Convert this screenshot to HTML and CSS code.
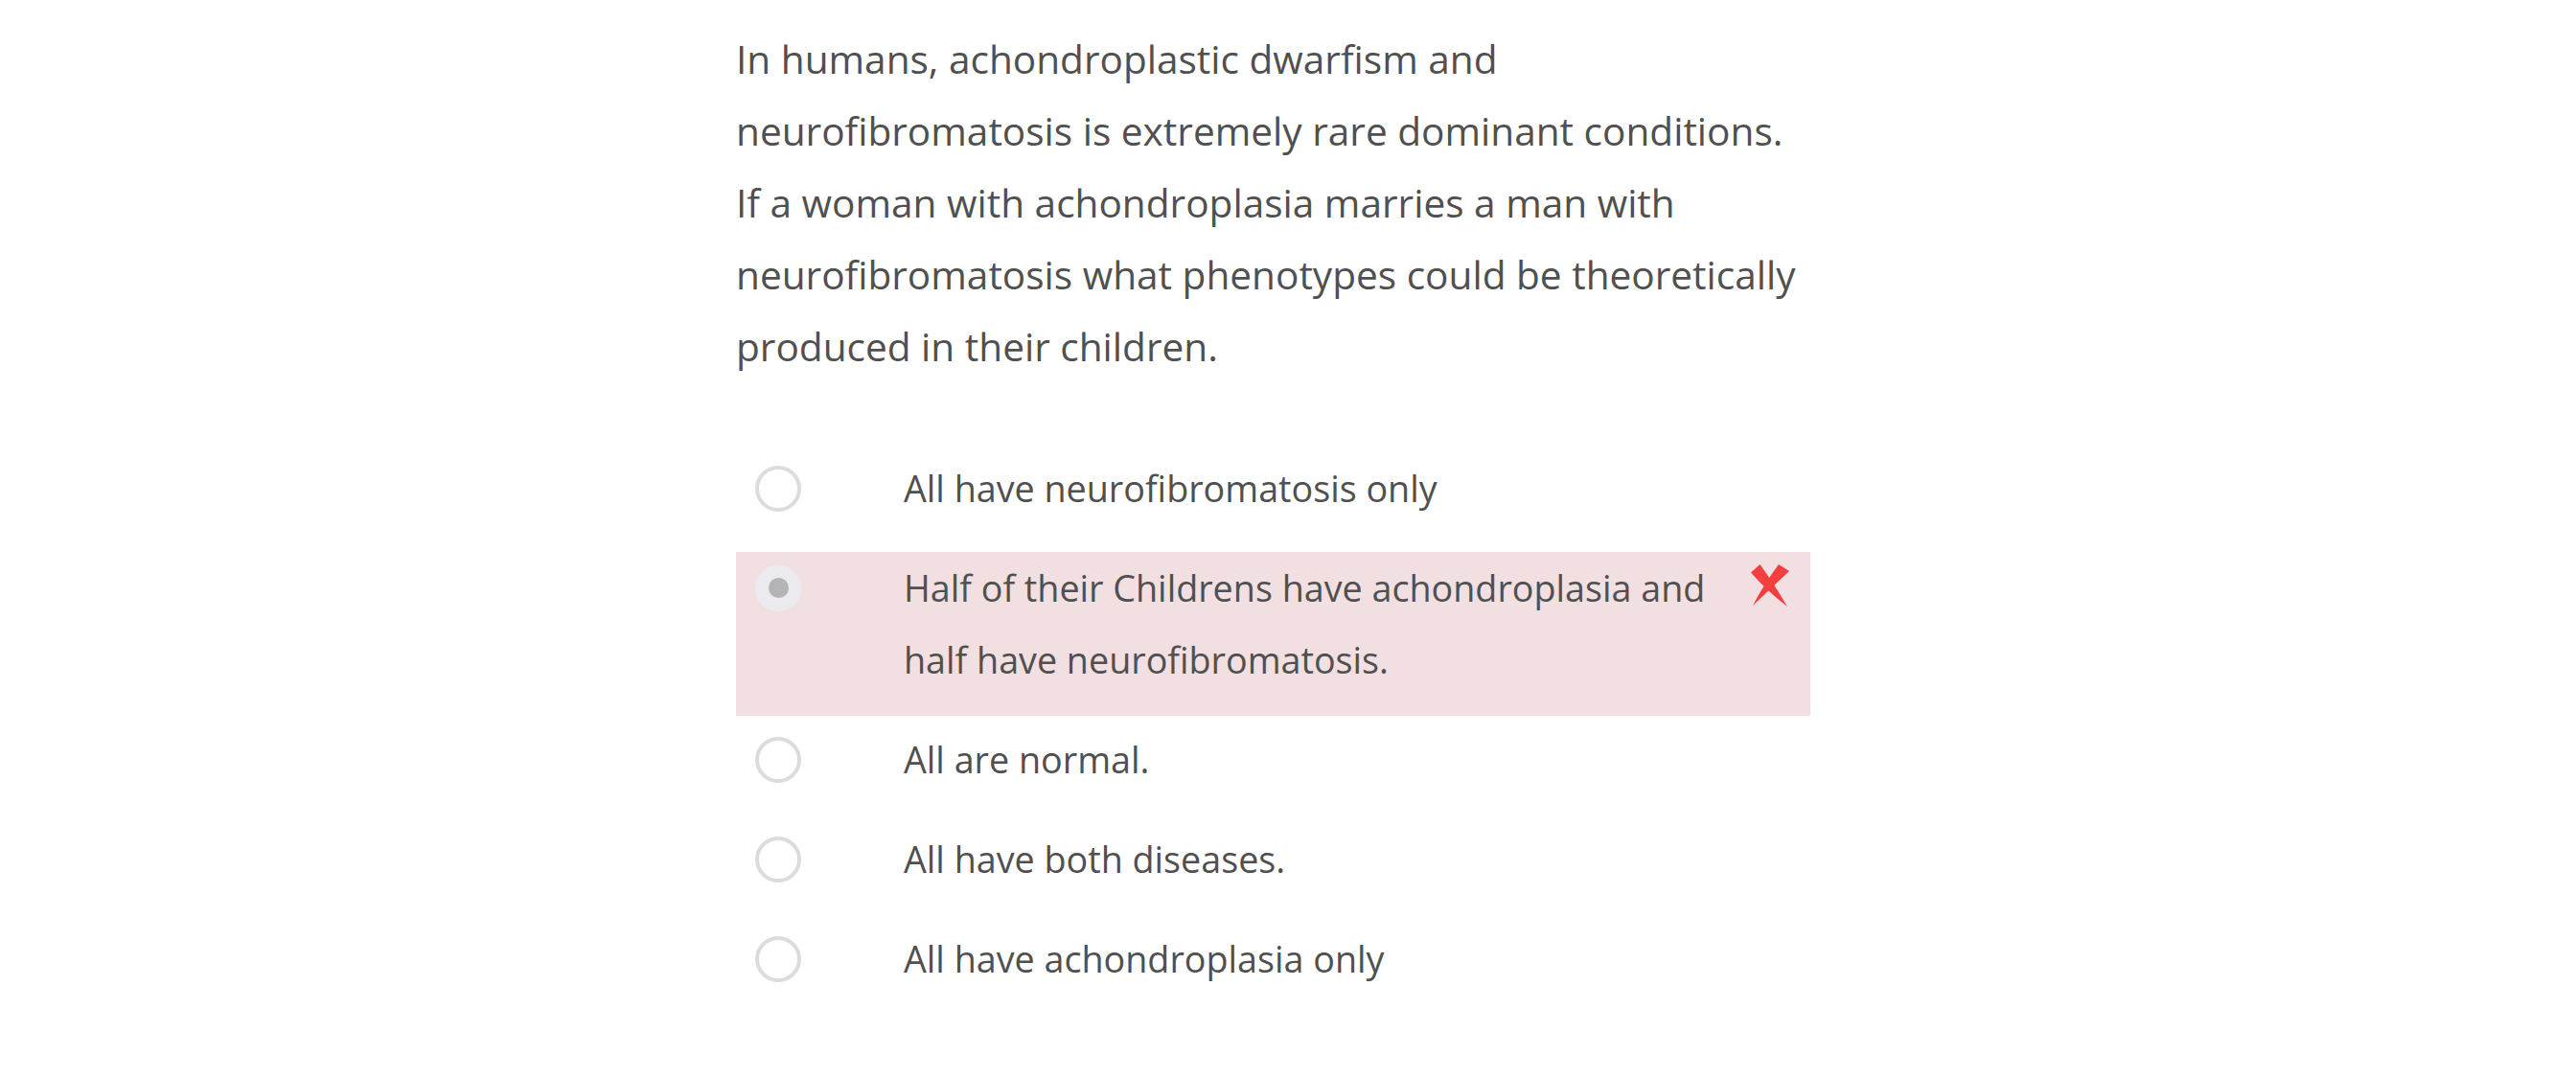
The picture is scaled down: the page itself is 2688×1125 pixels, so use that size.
FILE: index.html
```html
<!DOCTYPE html>
<html lang="en">
<head>
<meta charset="utf-8">
<title>Quiz question</title>
<link rel="stylesheet" href="styles.css">
</head>
<body>
<div class="quiz">
  <p class="question">In humans, achondroplastic dwarfism and neurofibromatosis is extremely rare dominant conditions. If a woman with achondroplasia marries a man with neurofibromatosis what phenotypes could be theoretically produced in their children.</p>
  <ul class="options">
    <li class="option"><span class="radio"></span><span class="label">All have neurofibromatosis only</span></li>
    <li class="option option--wrong"><span class="radio radio--checked"></span><span class="label">Half of their Childrens have achondroplasia and half have neurofibromatosis.</span><svg class="mark" viewBox="0 0 40 44" aria-hidden="true"><path d="M0,8.5 L9.5,0 Q24,20 38,44 Q16,27 0,8.5 Z"/><path d="M29,0 L40,7 Q22,24 2,43 Q14,20 29,0 Z"/></svg></li>
    <li class="option"><span class="radio"></span><span class="label">All are normal.</span></li>
    <li class="option"><span class="radio"></span><span class="label">All have both diseases.</span></li>
    <li class="option"><span class="radio"></span><span class="label">All have achondroplasia only</span></li>
  </ul>
</div>
</body>
</html>
```
FILE: styles.css
```css
html, body {
  margin: 0;
  background: #ffffff;
}

body {
  font-family: "Open Sans", Lato, "DejaVu Sans", sans-serif;
  font-variant-ligatures: none;
  color: #505050;
}

.quiz {
  margin-left: 768px;
  width: 1121px;
  padding-top: 24px;
}

.question {
  margin: 0 0 73px;
  font-size: 40.6px;
  line-height: 75px;
}

.options {
  list-style: none;
  margin: 0;
  padding: 0;
  display: flex;
  flex-direction: column;
  gap: 8px;
}

.option {
  display: flex;
  align-items: flex-start;
  padding: 0 22px 21px 20px;
  font-size: 37.7px;
  line-height: 75px;
}

.option--wrong {
  background: #f2dfe1;
}

.radio {
  flex: none;
  width: 48px;
  height: 48px;
  box-sizing: border-box;
  margin-top: 13.5px;
  border: 4px solid #dcdcdc;
  border-radius: 50%;
  background: #ffffff;
}

.radio--checked {
  display: flex;
  align-items: center;
  justify-content: center;
  border-color: #ebebef;
  background: #ebebef;
}

.radio--checked::after {
  content: "";
  width: 21px;
  height: 21px;
  border-radius: 50%;
  background: #b4b4b8;
}

.label {
  flex: 1;
  margin-left: 107px;
}

.mark {
  flex: none;
  width: 40px;
  height: 44px;
  margin-top: 13px;
  margin-left: 20px;
  fill: #f43f3f;
}
```
